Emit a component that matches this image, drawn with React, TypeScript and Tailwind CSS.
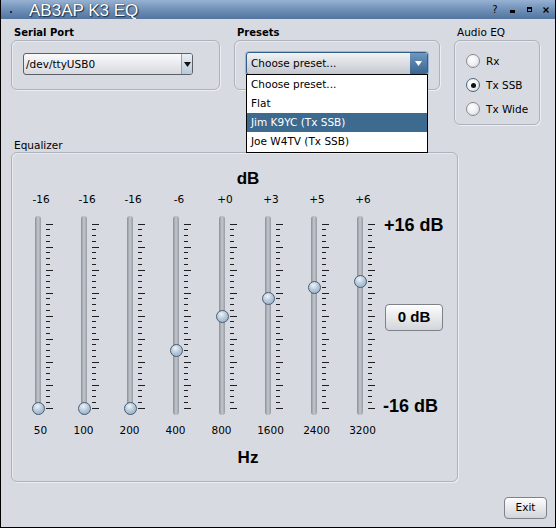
import React from "react";

const values = [-16, -16, -16, -6, 0, 3, 5, 6];
const freqs = [50, 100, 200, 400, 800, 1600, 2400, 3200];
const presets = ["Choose preset...", "Flat", "Jim K9YC (Tx SSB)", "Joe W4TV (Tx SSB)"];

const groupCls =
  "rounded-[6px] border border-[#aeb2ba] shadow-[inset_1px_1px_0_#e8eaee,1px_1px_0_#eceef1]";

function fmt(v: number) {
  return v >= 0 ? `+${v}` : `${v}`;
}

function Ticks() {
  const lines = [];
  for (let i = 0; i <= 32; i++) {
    const y = Math.floor(8 + i * 5.75) + 0.5;
    lines.push(
      <line key={i} x1={0} x2={i % 4 === 0 ? 7 : 4} y1={y} y2={y} stroke="#1e1e1e" strokeWidth={1} />
    );
  }
  return (
    <svg width={8} height={199} className="ml-[5px] shrink-0" shapeRendering="crispEdges">
      {lines}
    </svg>
  );
}

function Slider({ v, f }: { v: number; f: number }) {
  const cy = 8 + (16 - v) * 5.75;
  const three = String(f).length === 3;
  return (
    <div className="flex flex-col w-[34px] shrink-0">
      <div className="w-[36px] h-[14px] leading-[14px] text-center text-[10.5px] whitespace-nowrap">{fmt(v)}</div>
      <div className="relative mt-[10px] h-[199px] flex">
        <div className="ml-[12px] w-[6px] h-full rounded-[3px] bg-gradient-to-r from-[#8a8e96] via-[#c3c7ce] to-[#979ba3]" />
        <Ticks />
        <div
          className="absolute left-[8.5px] w-[13px] h-[13px] rounded-full border border-[#4a5d72] bg-[radial-gradient(circle_at_40%_30%,#eef3f8_0%,#b9cbdc_45%,#8ba6c2_100%)]"
          style={{ top: cy - 6.5 }}
        />
      </div>
      <div
        className={`${three ? "w-[29px]" : "w-[35px]"} mt-[8px] h-[14px] leading-[14px] text-center text-[10.5px] whitespace-nowrap`}
      >
        {f}
      </div>
    </div>
  );
}

function Radio({ label, checked }: { label: string; checked?: boolean }) {
  return (
    <div className="h-[24px] flex items-center gap-[6px]">
      <div
        className={`w-[14px] h-[14px] rounded-full border flex items-center justify-center bg-[radial-gradient(circle_at_40%_35%,#ffffff_0%,#eceef0_55%,#c6cad0_100%)] ${
          checked ? "border-[#4e6680]" : "border-[#868b93]"
        }`}
      >
        {checked && <div className="w-[5px] h-[5px] rounded-full bg-[#111]" />}
      </div>
      <span className="leading-none">{label}</span>
    </div>
  );
}

export default function App() {
  return (
    <div className="w-[556px] h-[528px] flex flex-col bg-[#d7dae0] border-x border-b border-black font-['DejaVu_Sans',sans-serif] text-[10.5px] text-black overflow-hidden">
      {/* title bar */}
      <div className="h-[19px] shrink-0 flex items-start overflow-hidden bg-gradient-to-b from-[#97b1d2] via-[#6f90b8] to-[#52749d]">
        <div className="w-[2px] h-[2px] bg-[#1b2a3d] ml-[9px] mt-[11px]" />
        <div className="ml-[17px] pt-[2px] leading-none text-[17px] text-white font-['Liberation_Sans',sans-serif] whitespace-nowrap [text-shadow:1px_1px_1px_#1c2d44,0_0_1px_#1c2d44]">
          AB3AP K3 EQ
        </div>
        <div className="ml-auto flex items-start mr-[6px]">
          <div className="w-[8px] text-center text-[10px] leading-none mt-[5px]">?</div>
          <div className="ml-[11px] w-[5px] h-[3px] bg-black mt-[10px]" />
          <div className="ml-[12px] w-[5px] h-[5px] border border-black border-t-2 mt-[7px]" />
          <svg width="6" height="6" className="ml-[11px] mt-[7px]">
            <line x1="0.5" y1="0.5" x2="5.5" y2="5.5" stroke="#000" strokeWidth="1.2" />
            <line x1="5.5" y1="0.5" x2="0.5" y2="5.5" stroke="#000" strokeWidth="1.2" />
          </svg>
        </div>
      </div>

      {/* body */}
      <div className="flex-1 flex flex-col pl-[10px] pt-[1px]">
        <div className="flex gap-[14px] items-start">
          {/* Serial port */}
          <div className="flex flex-col">
            <div className="h-[20px] pl-[3px] leading-[25px] font-bold text-[10px] whitespace-nowrap">Serial Port</div>
            <div className={`w-[209px] h-[50px] ${groupCls} pt-[12px] pl-[11px]`}>
              <div className="w-[170px] h-[22px] rounded-[3px] border border-[#5b6068] bg-gradient-to-b from-[#fbfbfc] to-[#d6d9de] flex overflow-hidden">
                <div className="flex-1 pl-[2px] leading-[20px] whitespace-nowrap">/dev/ttyUSB0</div>
                <div className="w-[11px] border-l border-[#9aa0a8] bg-gradient-to-b from-[#e9eff5] to-[#b9c8d8] flex items-center justify-center">
                  <svg width="7" height="5">
                    <polygon points="0,0 7,0 3.5,5" fill="#111" />
                  </svg>
                </div>
              </div>
            </div>
          </div>

          {/* Presets */}
          <div className="flex flex-col">
            <div className="h-[20px] pl-[3px] leading-[25px] font-bold text-[10px] whitespace-nowrap">Presets</div>
            <div className={`w-[206px] h-[50px] ${groupCls} pt-[11px] pl-[11px]`}>
              <div className="relative w-[182px] h-[23px]">
                <div className="w-full h-full rounded-[3px] border border-[#2f5f8f] shadow-[0_0_0_1px_#9ab8d6] bg-gradient-to-b from-[#f1f2f4] to-[#c4c8cf] flex overflow-hidden">
                  <div className="flex-1 pl-[4px] leading-[21px] whitespace-nowrap">Choose preset...</div>
                  <div className="w-[17px] bg-gradient-to-b from-[#6f97bf] to-[#3a658f] flex items-center justify-center">
                    <svg width="7" height="5">
                      <polygon points="0,0 7,0 3.5,5" fill="#fff" />
                    </svg>
                  </div>
                </div>
                <div className="absolute left-0 top-[22px] w-[182px] h-[79px] bg-white border border-black z-10">
                  {presets.map((p, i) => (
                    <div
                      key={p}
                      className={`h-[19px] leading-[19px] pl-[4px] whitespace-nowrap ${
                        i === 2 ? "bg-[#3d6a8f] text-white" : ""
                      }`}
                    >
                      {p}
                    </div>
                  ))}
                </div>
              </div>
            </div>
          </div>

          {/* Audio EQ */}
          <div className="flex flex-col">
            <div className="h-[20px] pl-[3px] leading-[25px] whitespace-nowrap">Audio EQ</div>
            <div className={`w-[86px] h-[85px] ${groupCls} pt-[8px] pl-[11px] flex flex-col`}>
              <Radio label="Rx" />
              <Radio label="Tx SSB" checked />
              <Radio label="Tx Wide" />
            </div>
          </div>
        </div>

        {/* Equalizer */}
        <div className="mt-[7px] h-[20px] pl-[3px] leading-[27px] whitespace-nowrap">Equalizer</div>
        <div className={`w-[447px] h-[330px] ${groupCls} pl-[11px] pt-[16px] flex flex-col`}>
          <div className="ml-[165px] w-[120px] text-center font-['Liberation_Sans',sans-serif] font-bold text-[17px] leading-[20px]">
            dB
          </div>
          <div className="mt-[3px] flex items-start">
            <div className="flex gap-[12px]">
              {values.map((v, i) => (
                <Slider key={i} v={v} f={freqs[i]} />
              ))}
            </div>
            <div className="ml-[5px] flex flex-col items-start font-['Liberation_Sans',sans-serif] font-bold">
              <div className="mt-[22px] text-[18px] leading-[22px] whitespace-nowrap">+16 dB</div>
              <div className="mt-[68px] ml-[1px] w-[58px] h-[27px] rounded-[4px] border border-[#7d828a] bg-gradient-to-b from-[#fdfdfd] to-[#d2d5da] text-[15px] flex items-center justify-center shadow-[inset_0_1px_0_#ffffff]">
                0 dB
              </div>
              <div className="mt-[64px] -ml-[1px] text-[18px] leading-[22px] whitespace-nowrap">-16 dB</div>
            </div>
          </div>
          <div className="ml-[165px] w-[120px] mt-[11px] text-center font-['Liberation_Sans',sans-serif] font-bold text-[17px] leading-[20px]">
            Hz
          </div>
        </div>

        <div className="mt-[15px] self-end mr-[8px] w-[43px] h-[22px] rounded-[4px] border border-[#7d828a] bg-gradient-to-b from-[#fdfdfd] to-[#d2d5da] flex items-center justify-center shadow-[inset_0_1px_0_#ffffff]">
          Exit
        </div>
      </div>
    </div>
  );
}
